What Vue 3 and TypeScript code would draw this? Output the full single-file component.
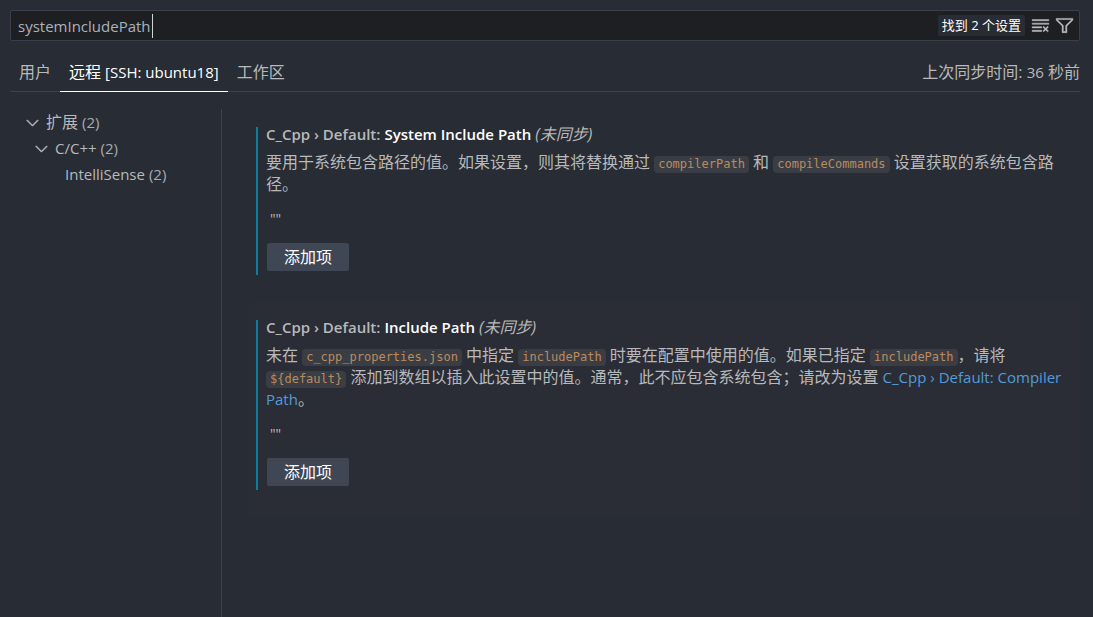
<script setup lang="ts">
import { ref } from 'vue'

type Part = { kind: 'text' | 'code' | 'link'; value: string }

interface Setting {
  id: string
  category: string
  label: string
  description: Part[]
  values: string[]
}

interface Tab {
  id: string
  label: string
  latin?: string
}

const query = ref('systemIncludePath')
const activeTab = ref('remote')
const focusedSetting = ref('include-path')

const tabs: Tab[] = [
  { id: 'user', label: '用户' },
  { id: 'remote', label: '远程', latin: '[SSH: ubuntu18]' },
  { id: 'workspace', label: '工作区' },
]

const tree = [
  { label: '扩展', count: 2, level: 'level-1', open: true, cjk: true },
  { label: 'C/C++', count: 2, level: 'level-2', open: true, cjk: false },
  { label: 'IntelliSense', count: 2, level: 'level-3', open: false, cjk: false },
]

const settings: Setting[] = [
  {
    id: 'system-include-path',
    category: 'C_Cpp › Default:',
    label: 'System Include Path',
    description: [
      { kind: 'text', value: '要用于系统包含路径的值。如果设置，则其将替换通过 ' },
      { kind: 'code', value: 'compilerPath' },
      { kind: 'text', value: ' 和 ' },
      { kind: 'code', value: 'compileCommands' },
      { kind: 'text', value: ' 设置获取的系统包含路径。' },
    ],
    values: ['""'],
  },
  {
    id: 'include-path',
    category: 'C_Cpp › Default:',
    label: 'Include Path',
    description: [
      { kind: 'text', value: '未在 ' },
      { kind: 'code', value: 'c_cpp_properties.json' },
      { kind: 'text', value: ' 中指定 ' },
      { kind: 'code', value: 'includePath' },
      { kind: 'text', value: ' 时要在配置中使用的值。如果已指定 ' },
      { kind: 'code', value: 'includePath' },
      { kind: 'text', value: '，请将 ' },
      { kind: 'code', value: '${default}' },
      { kind: 'text', value: ' 添加到数组以插入此设置中的值。通常，此不应包含系统包含；请改为设置 ' },
      { kind: 'link', value: 'C_Cpp › Default: Compiler Path' },
      { kind: 'text', value: '。' },
    ],
    values: ['""'],
  },
]
</script>

<template>
  <div class="editor" lang="zh-CN">
    <header class="header">
      <div class="search">
        <input v-model="query" class="search-input" type="text" aria-label="搜索设置" spellcheck="false" />
        <span class="caret" aria-hidden="true"></span>
        <span class="badge">找到 2 个设置</span>
        <button class="icon-button" type="button" aria-label="清除设置搜索输入">
          <svg class="icon" viewBox="0 0 16 16" fill="currentColor">
            <path d="M10 12.6l.7.7 1.6-1.6 1.6 1.6.8-.7L13 11l1.7-1.6-.8-.8-1.6 1.7-1.6-1.7-.7.8 1.6 1.6-1.6 1.6zM1 4h14V3H1v1zm0 3h14V6H1v1zm8 2.5V9H1v1h8v-.5zM9 13v-1H1v1h8z" />
          </svg>
        </button>
        <button class="icon-button" type="button" aria-label="筛选设置">
          <svg class="icon" viewBox="0 0 16 16" fill="currentColor">
            <path d="M15 2v1.67l-5 4.759V14H6V8.429l-5-4.76V2h14zM7 8v5h2V8l5-4.76V3H2v.24L7 8z" />
          </svg>
        </button>
      </div>
      <div class="bar">
        <nav class="tabs">
          <button
            v-for="tab in tabs"
            :key="tab.id"
            type="button"
            class="tab"
            :class="{ active: tab.id === activeTab }"
            @click="activeTab = tab.id"
          >
            <span>{{ tab.label }}</span>
            <span v-if="tab.latin" class="latin">{{ tab.latin }}</span>
          </button>
        </nav>
        <span class="sync">上次同步时间: <span class="latin">36</span> 秒前</span>
      </div>
    </header>

    <div class="body">
      <aside class="toc">
        <ul class="tree">
          <li v-for="node in tree" :key="node.label" class="node" :class="node.level">
            <svg v-if="node.open" class="icon" viewBox="0 0 16 16" fill="currentColor" aria-hidden="true">
              <path d="M7.976 10.072l4.357-4.357.62.618L8.284 11h-.618L3 6.333l.619-.618 4.357 4.357z" />
            </svg>
            <span :class="{ latin: !node.cjk }">{{ node.label }}</span>
            <span class="count">({{ node.count }})</span>
          </li>
        </ul>
      </aside>

      <main class="settings">
        <div
          v-for="setting in settings"
          :key="setting.id"
          class="row"
          :class="{ focused: setting.id === focusedSetting }"
        >
          <section class="setting">
            <h2 class="title">
              <span class="category">{{ setting.category }}</span>
              <span class="label">{{ setting.label }}</span>
              <em class="scope">(未同步)</em>
            </h2>
            <p class="description">
              <template v-for="(part, i) in setting.description" :key="i">
                <code v-if="part.kind === 'code'">{{ part.value }}</code>
                <a v-else-if="part.kind === 'link'" href="#compiler-path">{{ part.value }}</a>
                <template v-else>{{ part.value }}</template>
              </template>
            </p>
            <ul class="values">
              <li v-for="value in setting.values" :key="value">{{ value }}</li>
            </ul>
            <button class="add" type="button">添加项</button>
          </section>
        </div>
      </main>
    </div>
  </div>
</template>

<style>
body {
  margin: 0;
  background: #282c34;
}
</style>

<style scoped>
.editor {
  display: flex;
  flex-direction: column;
  min-height: 100vh;
  box-sizing: border-box;
  background: #282c34;
  color: #b8b9bb;
  font-family: "Open Sans", "Noto Sans CJK SC", sans-serif;
  font-size: 16px;
  line-height: 22px;
}

button,
input {
  font: inherit;
  color: inherit;
  border: 0;
  padding: 0;
  margin: 0;
  background: none;
}

.latin {
  font-size: 15px;
}

.icon {
  display: block;
  flex: none;
  width: 19px;
  height: 19px;
  stroke: currentColor;
  stroke-width: 0.4;
}

.header {
  padding: 10px 13px 0 10px;
}

.search {
  display: flex;
  align-items: center;
  height: 29px;
  padding: 0 5px 0 7px;
  border: 1px solid #3a3f4b;
  border-radius: 2px;
  background: #1d1f23;
}

.search-input {
  field-sizing: content;
  min-width: 8px;
  outline: none;
  color: #abb2bf;
  font-size: 15px;
}

.caret {
  width: 1px;
  height: 24px;
  margin-left: 1px;
  background: #d0d3d8;
}

.badge {
  margin-left: auto;
  margin-right: 6px;
  padding: 0 4px;
  border-radius: 2px;
  background: #282c34;
  color: #ffffff;
  font-size: 13px;
  line-height: 21px;
}

.icon-button + .icon-button {
  margin-left: 5px;
}

.icon-button {
  color: #c0c1c3;
}

.bar {
  display: flex;
  justify-content: space-between;
  margin-top: 12px;
  border-bottom: 1px solid #3e424c;
}

.tabs {
  display: flex;
}

.tab {
  display: flex;
  align-items: center;
  gap: 4px;
  height: 39px;
  padding: 0 9px;
  margin-bottom: -1px;
  border-bottom: 1px solid transparent;
}

.tab.active {
  color: #ffffff;
  border-bottom-color: #ffffff;
}

.sync {
  line-height: 38px;
}

.body {
  display: flex;
  flex: 1;
  padding-top: 17px;
}

.toc {
  flex: none;
  box-sizing: border-box;
  width: 222px;
  border-right: 1px solid #3e424c;
}

.tree {
  margin: 0;
  padding: 0;
  list-style: none;
}

.node {
  display: flex;
  align-items: center;
  gap: 4px;
  height: 26px;
}

.level-1 {
  padding-left: 23px;
}

.level-2 {
  padding-left: 32px;
}

.level-3 {
  padding-left: 65px;
}

.count {
  font-size: 15px;
  opacity: 0.9;
}

.settings {
  flex: 1;
  min-width: 0;
  padding: 0 13px 0 27px;
}

.row {
  padding: 18px 15px 27px 7px;
}

.row.focused {
  background: #2a2d35;
}

.setting {
  padding: 0 0 4px 8px;
  border-left: 2px solid #0c7d9d;
}

.title {
  margin: 0 0 10px;
  font-size: 15px;
  font-weight: 600;
  line-height: 14px;
}

.category {
  margin-right: 4px;
}

.label {
  color: #ffffff;
}

.scope {
  margin-left: 4px;
  font-size: 16px;
  font-weight: 400;
}

.description {
  margin: 0;
}

.description code {
  padding: 1px 4px 2px;
  border-radius: 4px;
  background: #3a3e44;
  color: #ba8b5f;
  font-family: "DejaVu Sans Mono", monospace;
  font-size: 12px;
  line-height: 16px;
}

.description a {
  color: #529bd8;
  font-size: 15px;
  text-decoration: none;
}

.values {
  margin: 13px 0;
  padding: 0 4px;
  list-style: none;
  font-size: 14px;
}

.add {
  display: block;
  height: 28px;
  padding: 0 17px;
  margin-left: 1px;
  border-radius: 2px;
  background: #404754;
  color: #ffffff;
}
</style>
